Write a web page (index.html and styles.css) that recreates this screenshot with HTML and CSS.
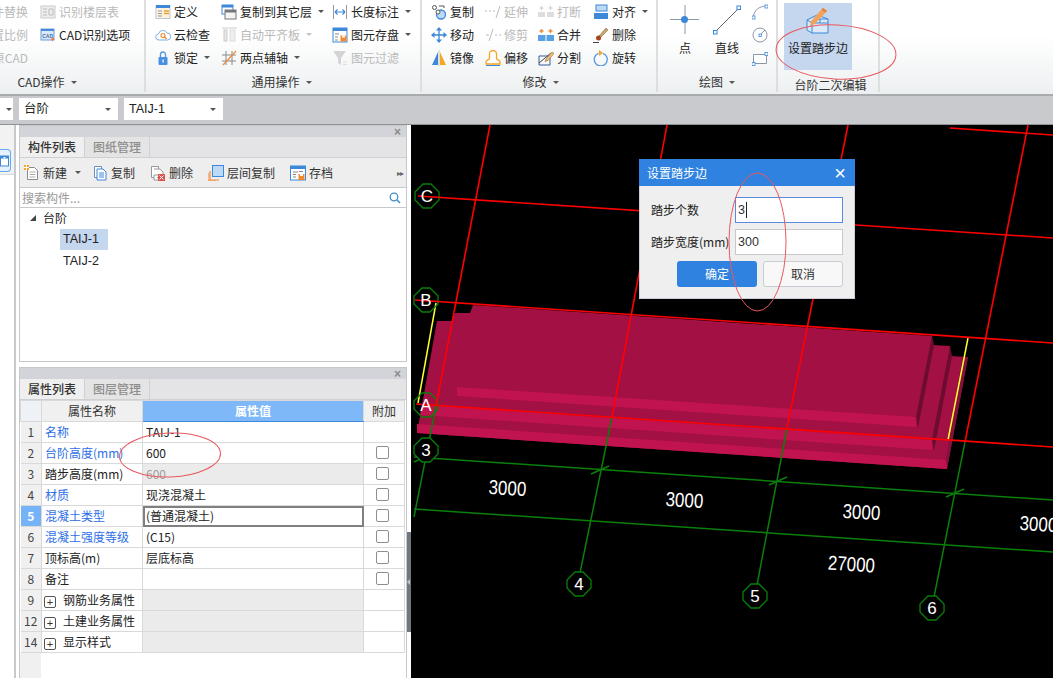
FILE: index.html
```html
<!DOCTYPE html>
<html lang="zh-CN">
<head>
<meta charset="utf-8">
<title>设置踏步边</title>
<link rel="stylesheet" href="styles.css">
</head>
<body>
<div class="app">
  <header class="ribbon">
    <section class="group g1">
      <div class="gbody">
        <div class="col clipcol">
          <div class="cell off"><span class="nowrap">构件替换</span></div>
          <div class="cell off"><span class="nowrap">设置比例</span></div>
          <div class="cell off"><span class="nowrap">还原CAD</span></div>
        </div>
        <div class="col">
          <div class="cell off"><svg class="ic" viewBox="0 0 16 16"><rect x="1" y="2" width="14" height="12" fill="#eee" stroke="#ccc"/><path d="M3 5h4M3 8h4M3 11h4M9 5h4v6H9z" stroke="#bbb" fill="none"/></svg><span>识别楼层表</span></div>
          <div class="cell"><svg class="ic" viewBox="0 0 16 16"><rect x="1" y="2" width="13" height="11" fill="#dce8f8" stroke="#6a9bd8"/><rect x="1" y="2" width="13" height="2" fill="#4a8ad8"/><text x="2.2" y="10.5" class="tiny">CAD</text><path d="M11 10l4 2-2 1-.5 2z" fill="#ef7a3a"/></svg><span>CAD识别选项</span></div>
          <div class="cell"></div>
        </div>
      </div>
      <div class="gtitle">CAD操作<i class="caret"></i></div>
    </section>

    <section class="group g2">
      <div class="gbody">
        <div class="col w66">
          <div class="cell"><svg class="ic" viewBox="0 0 16 16"><rect x="1" y="1.500" width="14" height="13" fill="#fdf3dc" stroke="#b9c7d8"/><rect x="1" y="1" width="14" height="3" fill="#3d88d8"/><path d="M3 7h4M3 9.500h4M3 12h4" stroke="#999"/><path d="M9 7h5M9 9.500h5" stroke="#f0a030" stroke-width="1.500"/></svg><span>定义</span></div>
          <div class="cell"><svg class="ic" viewBox="0 0 16 16"><path d="M4 13a3 3 0 0 1-.5-6 4.500 4.500 0 0 1 8.500-1 3.500 3.500 0 0 1 .5 7z" fill="#fff" stroke="#7fb2e8"/><circle cx="8" cy="8.500" r="2" fill="none" stroke="#f08a30" stroke-width="1.200"/><path d="M9.500 10l2 2" stroke="#f08a30" stroke-width="1.200"/></svg><span>云检查</span></div>
          <div class="cell"><svg class="ic" viewBox="0 0 16 16"><path d="M5.500 7V4.500a2.500 2.500 0 0 1 5 0V7" fill="none" stroke="#5a9ae0" stroke-width="1.400"/><rect x="3.500" y="7" width="9" height="8" rx="1" fill="#4a90e2"/><rect x="7.500" y="9.500" width="1.200" height="3" fill="#fff"/></svg><span>锁定</span><i class="caret"></i></div>
        </div>
        <div class="col w111">
          <div class="cell"><svg class="ic" viewBox="0 0 16 16"><rect x="1" y="1" width="11" height="9" fill="#fff" stroke="#3d88d8"/><rect x="1" y="1" width="11" height="2.500" fill="#3d88d8"/><rect x="4" y="6" width="11" height="9" fill="#f4f4f4" stroke="#777"/><rect x="4" y="6" width="11" height="2.500" fill="#777"/></svg><span>复制到其它层</span><i class="caret"></i></div>
          <div class="cell off"><svg class="ic" viewBox="0 0 16 16"><path d="M1 1h15" stroke="#ccc"/><rect x="3" y="3" width="3" height="11" fill="#e6e6e6" stroke="#ccc"/><rect x="9" y="3" width="5" height="11" fill="#eee" stroke="#ddd"/></svg><span>自动平齐板</span><i class="caret"></i></div>
          <div class="cell"><svg class="ic" viewBox="0 0 16 16"><path d="M5 1v14M11 1v14M1 5h14M1 11h14" stroke="#8a8a8a" fill="none"/><path d="M2 15L15 1" stroke="#ef8a3a" stroke-width="1.200"/></svg><span>两点辅轴</span><i class="caret"></i></div>
        </div>
        <div class="col">
          <div class="cell"><svg class="ic" viewBox="0 0 16 16"><path d="M1.500 1v14M14.500 1v14" stroke="#999"/><path d="M3 8h10M3 8l2.500-2.500M3 8l2.500 2.500M13 8l-2.500-2.500M13 8l-2.500 2.500" stroke="#3d88d8" stroke-width="1.200" fill="none"/></svg><span>长度标注</span><i class="caret"></i></div>
          <div class="cell"><svg class="ic" viewBox="0 0 16 16"><rect x="1" y="1" width="14" height="14" fill="#fff" stroke="#3d88d8"/><rect x="1" y="1" width="14" height="3" fill="#3d88d8"/><path d="M3 7h4M3 10h3M3 13h3" stroke="#888"/><rect x="8.500" y="8.500" width="6" height="6" fill="#f08a30"/><rect x="10" y="8.500" width="3" height="2" fill="#fff"/></svg><span>图元存盘</span><i class="caret"></i></div>
          <div class="cell off"><svg class="ic" viewBox="0 0 16 16"><path d="M1 1h13L9 8v7L6 13V8z" fill="#d4d4d4"/><path d="M11 12h4M11 14.500h4" stroke="#ddd"/></svg><span>图元过滤</span></div>
        </div>
      </div>
      <div class="gtitle">通用操作<i class="caret"></i></div>
    </section>

    <section class="group g3">
      <div class="gbody">
        <div class="col w54">
          <div class="cell"><svg class="ic" viewBox="0 0 16 16"><circle cx="3.500" cy="3.500" r="2" fill="#fff" stroke="#555"/><path d="M8 2h5v2" fill="none" stroke="#555"/><circle cx="10" cy="10.500" r="4.500" fill="#bcd9f5" stroke="#3d88d8" stroke-width="1.300"/><circle cx="7" cy="8" r="2" fill="#fff" stroke="#555"/></svg><span>复制</span></div>
          <div class="cell"><svg class="ic" viewBox="0 0 16 16"><path d="M8 0l3 3.500H5zM8 16l-3-3.500h6zM0 8l3.500-3v6zM16 8l-3.500 3V5z" fill="#3d88d8"/><path d="M8 3v10M3 8h10" stroke="#3d88d8" stroke-width="1.300"/></svg><span>移动</span></div>
          <div class="cell"><svg class="ic" viewBox="0 0 16 16"><path d="M7 2v13H1z" fill="#3d88d8"/><path d="M9 2v13h6z" fill="#f5a623"/><path d="M8 0v16" stroke="#aaa" stroke-width=".6"/></svg><span>镜像</span></div>
        </div>
        <div class="col w53">
          <div class="cell off"><svg class="ic" viewBox="0 0 16 16"><path d="M0 7h2M4 7h2M8 7h2" stroke="#bbb"/><path d="M11 14l4-12" stroke="#bbb"/></svg><span>延伸</span></div>
          <div class="cell off"><svg class="ic" viewBox="0 0 16 16"><path d="M1 8h3M10 8h2M14 8h2" stroke="#bbb"/><path d="M4 14L8 2" stroke="#bbb"/></svg><span>修剪</span></div>
          <div class="cell"><svg class="ic" viewBox="0 0 16 16"><path d="M1 14v-2c0-2 3-2 3.500-3.500V4a3.500 3.500 0 0 1 7 0v4.500C12 10 15 10 15 12v2z" fill="#fff" stroke="#f5a623" stroke-width="1.300"/><path d="M1 15.500h14" stroke="#3d88d8"/></svg><span>偏移</span></div>
        </div>
        <div class="col w55">
          <div class="cell off"><svg class="ic" viewBox="0 0 16 16"><rect x="0" y="8" width="7" height="5" fill="#ddd"/><rect x="9" y="8" width="7" height="5" fill="#ddd"/><path d="M3.500 2v4M1.500 4h4M12.500 2v4M10.500 4h4" stroke="#ccc"/></svg><span>打断</span></div>
          <div class="cell"><svg class="ic" viewBox="0 0 16 16"><rect x="0" y="8" width="16" height="6" fill="#5aa0e6"/><path d="M8 8v6" stroke="#fff"/><path d="M3.500 2v4M1.500 4h4M12.500 2v4M10.500 4h4" stroke="#f08a30" stroke-width="1.300"/></svg><span>合并</span></div>
          <div class="cell"><svg class="ic" viewBox="0 0 16 16"><path d="M1 6h11v9H1z" fill="none" stroke="#335f99"/><path d="M1 13L13 3" stroke="#444"/><path d="M8 9l6-7 2 1.500-6 7-3 1z" fill="#f0c080" stroke="#a06030" stroke-width=".6"/></svg><span>分割</span></div>
        </div>
        <div class="col">
          <div class="cell"><svg class="ic" viewBox="0 0 16 16"><rect x="3" y="1" width="11" height="6" fill="#bcd9f5" stroke="#3d88d8"/><rect x="1" y="9" width="14" height="6" fill="#3d88d8"/></svg><span>对齐</span><i class="caret"></i></div>
          <div class="cell"><svg class="ic" viewBox="0 0 16 16"><path d="M6 9l7-8 2 2-7 7z" fill="#c9a770" stroke="#8a6a40" stroke-width=".6"/><circle cx="5.500" cy="11" r="2.500" fill="#a8441c"/><path d="M0 15.500h6" stroke="#444"/></svg><span>删除</span></div>
          <div class="cell"><svg class="ic" viewBox="0 0 16 16"><path d="M10 3.300a6.500 6.500 0 1 1-4.500 0" fill="none" stroke="#5a9ae0" stroke-width="1.300"/><path d="M6 0v6l4-3z" fill="#f5a623"/></svg><span>旋转</span></div>
        </div>
      </div>
      <div class="gtitle">修改<i class="caret"></i></div>
    </section>

    <section class="group g4">
      <div class="gbody">
        <div class="bigbtn">
          <svg class="bigic" viewBox="0 0 30 30"><path d="M15 0v29M0 14.500h29" stroke="#8a97a5"/><circle cx="14.500" cy="14.500" r="3.500" fill="#3d88d8"/></svg>
          <span>点</span>
        </div>
        <div class="bigbtn">
          <svg class="bigic" viewBox="0 0 30 30"><path d="M3 27L27 3" stroke="#667"/><rect x="25" y="1" width="3.500" height="3.500" fill="#fff" stroke="#3d88d8"/><rect x="1.500" y="25.500" width="3.500" height="3.500" fill="#fff" stroke="#3d88d8"/></svg>
          <span>直线</span>
        </div>
        <div class="col smallcol">
          <div class="cell"><svg class="ic" viewBox="0 0 16 16"><path d="M1.500 13C2 6 7 2.500 14 2" fill="none" stroke="#8a97a5"/><rect x="0" y="12" width="3" height="3" fill="#fff" stroke="#3d88d8" stroke-width=".8"/><rect x="13" y="1" width="3" height="3" fill="#fff" stroke="#3d88d8" stroke-width=".8"/></svg></div>
          <div class="cell"><svg class="ic" viewBox="0 0 16 16"><circle cx="8" cy="8" r="7" fill="#fff" stroke="#8a97a5"/><rect x="7" y="7" width="2.500" height="2.500" fill="#fff" stroke="#3d88d8" stroke-width=".8"/><path d="M9 7l4-4" stroke="#8a97a5"/></svg></div>
          <div class="cell"><svg class="ic" viewBox="0 0 16 16"><path d="M1.500 4.500h13v9h-13z" fill="#fff" stroke="#8a97a5"/><rect x="13" y="2.500" width="3" height="3" fill="#fff" stroke="#3d88d8" stroke-width=".8"/><rect x="0" y="12.500" width="3" height="3" fill="#fff" stroke="#3d88d8" stroke-width=".8"/></svg></div>
        </div>
      </div>
      <div class="gtitle">绘图<i class="caret"></i></div>
    </section>

    <section class="group g5">
      <div class="gbody">
        <div class="hibtn">
          <svg class="hiic" viewBox="0 0 24 30"><path d="M1 14l10-5 11 4v14H6L1 24z" fill="#dbe8f8" stroke="#3d88d8"/><path d="M6 17v10M6 17h16M1 14l5 3M14 17v-4M14 13H8M22 13l-8 0" fill="none" stroke="#3d88d8"/><path d="M5 15L17 2l4 3L9 18l-5 2z" fill="#f0a35a"/><path d="M17 2l4 3-1.500 1.500-4-3z" fill="#e88030"/></svg>
          <span>设置踏步边</span>
        </div>
      </div>
      <div class="gtitle low">台阶二次编辑</div>
    </section>
  </header>

  <div class="selbar">
    <div class="sel sel0"><i class="caret"></i></div>
    <div class="sel"><span>台阶</span><i class="caret"></i></div>
    <div class="sel"><span>TAIJ-1</span><i class="caret"></i></div>
  </div>

  <main class="main">
    <aside class="side">
      <div class="sidetop">
        <div class="sidebtn"><svg viewBox="0 0 10 14" class="sideic"><rect x=".5" y="2" width="8" height="10" fill="#fff" stroke="#3d88d8"/><rect x=".5" y="2" width="8" height="2.500" fill="#3d88d8"/><path d="M3 3h3l-1.500 1.500z" fill="#fff"/></svg></div>
      </div>
    </aside>

    <div class="panels">
      <section class="panel p1">
        <div class="pbar"><span class="close">×</span></div>
        <div class="tabs"><span class="tab on">构件列表</span><span class="tab">图纸管理</span></div>
        <div class="ptools">
          <div class="tool t-new"><svg class="ic" viewBox="0 0 16 16"><path d="M3.500 2.500h7l3 3v9h-10z" fill="#fff" stroke="#8a8a8a"/><path d="M5.500 7h6M5.500 9.500h6M5.500 12h6" stroke="#aaa"/><rect x="0" y="0" width="5" height="5" fill="#f5a623"/><path d="M0 2.500h5M2.500 0v5" stroke="#fff"/></svg><span>新建</span><i class="caret"></i></div>
          <div class="tool"><svg class="ic" viewBox="0 0 16 16"><path d="M2.500 1.500h7v11h-7z" fill="#fff" stroke="#6a8fb8"/><path d="M5 4h6l3 3v8H5z" fill="#fff" stroke="#3d88d8"/><path d="M7 8h5M7 10h5M7 12h5" stroke="#3d88d8"/></svg><span>复制</span></div>
          <div class="tool"><svg class="ic" viewBox="0 0 16 16"><path d="M1.500 1.500h7v11h-7z" fill="#fff" stroke="#999"/><path d="M4 4h6l3 3v3H4v5h4" fill="#fff" stroke="#999"/><rect x="8" y="9" width="7" height="7" fill="#d9534f"/><path d="M9.500 10.500l4 4M13.500 10.500l-4 4" stroke="#fff"/></svg><span>删除</span></div>
          <div class="tool"><svg class="ic" viewBox="0 0 16 16"><path d="M2 6v9h9" fill="none" stroke="#f08a30" stroke-width="1.200"/><path d="M0 8v8h8" fill="none" stroke="#f08a30" stroke-width="1"/><rect x="4.500" y=".5" width="11" height="11" fill="#bcd9f5" stroke="#3d88d8"/></svg><span>层间复制</span></div>
          <div class="tool"><svg class="ic" viewBox="0 0 16 16"><rect x=".5" y="1" width="15" height="14" fill="#fff" stroke="#3d88d8"/><rect x=".5" y="1" width="15" height="3" fill="#3d88d8"/><path d="M3 7h5M3 9.500h3M3 12h3M9 6.500h4" stroke="#888"/><rect x="8.500" y="9" width="6" height="6" fill="#f08a30"/><rect x="10" y="9" width="3" height="2" fill="#fff"/></svg><span>存档</span></div>
          <span class="more">▸▸</span>
        </div>
        <div class="search"><span>搜索构件...</span><svg class="searchic" viewBox="0 0 12 12"><circle cx="5" cy="5" r="3.800" fill="none" stroke="#3d8fc8" stroke-width="1.300"/><path d="M8 8l3 3" stroke="#3d8fc8" stroke-width="1.500"/></svg></div>
        <div class="tree">
          <div class="troot"><i class="tri"></i><span>台阶</span></div>
          <div class="titem"><span class="sel-item">TAIJ-1</span></div>
          <div class="titem"><span class="plain-item">TAIJ-2</span></div>
        </div>
      </section>

      <section class="panel p2">
        <div class="pbar"><span class="close">×</span></div>
        <div class="tabs"><span class="tab on">属性列表</span><span class="tab">图层管理</span></div>
        <div class="tblwrap">
          <table class="props">
            <colgroup><col class="c0"><col class="c1"><col class="c2"><col class="c3"></colgroup>
            <thead><tr><th></th><th>属性名称</th><th class="hval">属性值</th><th>附加</th></tr></thead>
            <tbody>
              <tr><td class="n">1</td><td class="blue">名称</td><td>TAIJ-1</td><td></td></tr>
              <tr><td class="n">2</td><td class="blue">台阶高度(mm)</td><td>600</td><td class="ck"><i class="box"></i></td></tr>
              <tr><td class="n">3</td><td>踏步高度(mm)</td><td class="gray dim">600</td><td class="ck"><i class="box"></i></td></tr>
              <tr><td class="n">4</td><td class="blue">材质</td><td>现浇混凝土</td><td class="ck"><i class="box"></i></td></tr>
              <tr><td class="n cur">5</td><td class="blue">混凝土类型</td><td class="focus">(普通混凝土)</td><td class="ck"><i class="box"></i></td></tr>
              <tr><td class="n">6</td><td class="blue">混凝土强度等级</td><td>(C15)</td><td class="ck"><i class="box"></i></td></tr>
              <tr><td class="n">7</td><td>顶标高(m)</td><td>层底标高</td><td class="ck"><i class="box"></i></td></tr>
              <tr><td class="n">8</td><td>备注</td><td></td><td class="ck"><i class="box"></i></td></tr>
              <tr><td class="n">9</td><td class="grp"><i class="plus">+</i>钢筋业务属性</td><td class="gray"></td><td></td></tr>
              <tr><td class="n">12</td><td class="grp"><i class="plus">+</i>土建业务属性</td><td class="gray"></td><td></td></tr>
              <tr><td class="n">14</td><td class="grp"><i class="plus">+</i>显示样式</td><td class="gray"></td><td></td></tr>
            </tbody>
          </table>
          <div class="tblrest"><div class="restn"></div></div>
        </div>
      </section>
    </div>

    <div class="split"><div class="handle"><i class="harrow"></i></div></div>

    <div class="canvas">
      <svg class="cad" viewBox="411 125 642 553" preserveAspectRatio="none">
        <polygon class="face" points="437,321 452,321 455,313 470,313 473,305 932,336 932,345 950,346 950,356 968,357 947,469 417,433"/>
        <polygon class="bright" points="417,424 947,460 947,469 417,433"/>
        <polygon class="bright" points="422,405 932,440 932,450 420,415"/>
        <polygon class="bright" points="457,387 916,417 916,427 457,396"/>
        <polygon class="side1" points="932,336 934,345 918,428 916,417"/>
        <polygon class="side1" points="950,346 952,356 934,451 932,440"/>
        <polygon class="side2" points="962,357 968,357 947,469 946,460"/>

        <g class="yellow"><line x1="436" y1="303" x2="418" y2="403"/><line x1="968" y1="338" x2="948" y2="440"/></g>

        <g class="green">
          <line x1="436" y1="406" x2="414" y2="517"/>
          <line x1="612" y1="417" x2="580" y2="573"/>
          <line x1="787" y1="428" x2="757" y2="585"/>
          <line x1="965" y1="442" x2="934" y2="597"/>
          <line x1="414" y1="457" x2="1053" y2="500"/>
          <line x1="414" y1="509" x2="1053" y2="552"/>
          <line x1="414" y1="462" x2="432" y2="454"/>
          <line x1="591" y1="474" x2="609" y2="466"/>
          <line x1="769" y1="485" x2="787" y2="477"/>
          <line x1="946" y1="497" x2="964" y2="489"/>
          <polygon class="oct open" points="423,184 431,184 439,192 439,200 431,208 423,208 415,200 415,192"/>
          <polygon class="oct open" points="422,288 430,288 438,296 438,304 430,312 422,312 414,304 414,296"/>
          <polygon class="oct open" points="422,393 430,393 438,401 438,409 430,417 422,417 414,409 414,401"/>
          <polygon class="oct" points="422,438 430,438 438,446 438,454 430,462 422,462 414,454 414,446"/>
          <polygon class="oct" points="575,572 583,572 591,580 591,588 583,596 575,596 567,588 567,580"/>
          <polygon class="oct" points="751,584 759,584 767,592 767,600 759,608 751,608 743,600 743,592"/>
          <polygon class="oct" points="928,596 936,596 944,604 944,612 936,620 928,620 920,612 920,604"/>
        </g>

        <g class="red">
          <line x1="490" y1="125" x2="436" y2="406"/>
          <line x1="667" y1="125" x2="612" y2="417"/>
          <line x1="848" y1="125" x2="787" y2="428"/>
          <line x1="1028" y1="125" x2="965" y2="442"/>
          <line x1="418" y1="196" x2="1053" y2="238"/>
          <line x1="415" y1="300" x2="1053" y2="343"/>
          <line x1="416" y1="404" x2="1053" y2="447"/>
          <line x1="950" y1="128" x2="1053" y2="135"/>
        </g>

        <g class="labels">
          <text x="427" y="202">C</text>
          <text x="426" y="306">B</text>
          <text x="426" y="411">A</text>
          <text x="426" y="456">3</text>
          <text x="579" y="590">4</text>
          <text x="755" y="602">5</text>
          <text x="932" y="614">6</text>
          <text class="dim-t" transform="translate(507,495) rotate(3.8) scale(.94,1.12)">3000</text>
          <text class="dim-t" transform="translate(684,507) rotate(3.8) scale(.94,1.12)">3000</text>
          <text class="dim-t" transform="translate(861,519) rotate(3.8) scale(.94,1.12)">3000</text>
          <text class="dim-t" transform="translate(1038,531) rotate(3.8) scale(.94,1.12)">3000</text>
          <text class="dim-t" transform="translate(851,571) rotate(3.8) scale(.94,1.12)">27000</text>
        </g>
      </svg>

      <div class="dialog">
        <div class="dhead"><span>设置踏步边</span><span class="dx">×</span></div>
        <div class="dbody">
          <div class="drow"><label>踏步个数</label><div class="dinput active">3<i class="cursor"></i></div></div>
          <div class="drow"><label>踏步宽度(mm)</label><div class="dinput">300</div></div>
          <div class="dbtns"><span class="btn ok">确定</span><span class="btn cancel">取消</span></div>
        </div>
      </div>
    </div>
  </main>

  <svg class="marks" viewBox="0 0 1053 678">
    <ellipse cx="836" cy="52" rx="60" ry="27" transform="rotate(3 836 52)"/>
    <ellipse cx="170" cy="455" rx="50.500" ry="22" transform="rotate(-2 170 455)"/>
    <ellipse cx="757.500" cy="242" rx="28.500" ry="69"/>
  </svg>
</div>
</body>
</html>
```

FILE: styles.css
```css
* { box-sizing: border-box; }
html, body { margin: 0; padding: 0; }
body {
  width: 1053px;
  height: 678px;
  overflow: hidden;
  font-family: "Noto Sans CJK SC", "Liberation Sans", sans-serif;
  font-size: 12px;
  line-height: 16px;
  color: #222;
  background: #fff;
}
i { font-style: normal; }
svg { display: block; flex: none; }

.app { position: relative; width: 1053px; height: 678px; display: flex; flex-direction: column; }

/* Ribbon */
.ribbon {
  height: 96px;
  flex: none;
  display: flex;
  background: linear-gradient(#ffffff 0, #ffffff 35px, #edf0f1 93px);
  border-bottom: 2px solid #a9abae;
}
.group { display: flex; flex-direction: column; height: 92px; border-right: 2px solid #dcdedf; }
.g1 { width: 146px; }
.g2 { width: 276px; padding-left: 9px; }
.g3 { width: 236px; padding-left: 9px; }
.g4 { width: 120px; padding-left: 6px; }
.g5 { width: 102px; padding-left: 6px; }
.gbody { display: flex; height: 70px; flex: none; }
.col { display: flex; flex-direction: column; }
.clipcol { width: 28px; margin-right: 12px; overflow: hidden; }
.clipcol .cell { justify-content: flex-end; }
.nowrap { white-space: nowrap; flex: none; }
.w66 { width: 66px; }
.w111 { width: 111px; }
.w54 { width: 54px; }
.w53 { width: 53px; }
.w55 { width: 55px; }
.cell { height: 23px; display: flex; align-items: center; gap: 3px; white-space: nowrap; }
.off { color: #b9b9b9; }
.ic { width: 16px; height: 16px; }
.tiny { font-size: 5px; font-family: "Liberation Sans", sans-serif; fill: #3d6fb0; font-weight: 700; }
.caret {
  display: inline-block;
  width: 0; height: 0;
  border-left: 3px solid transparent;
  border-right: 3px solid transparent;
  border-top: 3px solid #555;
  margin-left: 3px;
  flex: none;
}
.off .caret { border-top-color: #c4c4c4; }
.gtitle {
  height: 22px;
  display: flex;
  align-items: center;
  justify-content: center;
  color: #333;
  padding-top: 2px;
  padding-right: 6px;
}
.gtitle .caret { margin-left: 6px; }
.g1 .gtitle { padding-right: 50px; }
.g2 .gtitle { padding-right: 12px; }
.g5 .gtitle { padding-right: 1px; }
.gtitle.low { padding-top: 8px; }

.bigbtn { width: 42px; display: flex; flex-direction: column; align-items: center; padding-top: 5px; gap: 5px; }
.bigic { width: 30px; height: 30px; }
.smallcol { margin-left: 4px; }

.hibtn {
  width: 68px; height: 67px; margin-top: 3px;
  background: #c5d6ef;
  display: flex; flex-direction: column; align-items: center;
  padding-top: 3px; gap: 4px;
}
.hiic { width: 24px; height: 30px; }
.hibtn span { white-space: nowrap; }

/* Select bar */
.selbar {
  height: 29px; flex: none;
  background: #c8cacd;
  border-bottom: 1px solid #8f9194;
  display: flex; gap: 6px; align-items: flex-start;
  padding-top: 2px;
}
.sel {
  width: 99px; height: 22px;
  background: #fff;
  display: flex; align-items: center; justify-content: space-between;
  padding: 0 7px 0 5px;
  font-family: "Liberation Sans", "Noto Sans CJK SC", sans-serif;
  font-size: 12.500px;
}
.sel0 { width: 13px; padding: 0 1px 0 0; justify-content: flex-end; }
.sel0 .caret, .sel .caret { margin: 0; }

/* Main */
.main { flex: 1; min-height: 0; display: flex; }
.side { width: 16px; flex: none; border-right: 2px solid #c8c9cd; }
.sidetop { height: 50px; background: #f2f2f2; border-bottom: 1px solid #d8d8d8; padding-top: 24px; }
.sidebtn { width: 11px; height: 23px; border: 1px solid #62aaf6; border-left: 0; border-radius: 0 4px 4px 0; background: #e6f1fc; padding-top: 4px; }
.sideic { width: 10px; height: 14px; }

.panels { margin-left: 3px; width: 388px; flex: none; display: flex; flex-direction: column; gap: 5px; }
.panel { border: 1px solid #c7c8cc; border-top: 0; display: flex; flex-direction: column; background: #fff; min-height: 0; }
.p1 { height: 237px; }
.p2 { flex: 1; border-bottom: 0; }
.pbar { height: 12px; flex: none; background: #d3d4d9; border-top: 1px solid #c7c8cc; display: flex; justify-content: flex-end; align-items: center; padding-right: 5px; }
.close { color: #8a8a8a; font-size: 12px; font-weight: 700; line-height: 10px; font-family: "Liberation Sans", sans-serif; }
.tabs { height: 21px; flex: none; display: flex; background: #e4e4e6; border-bottom: 1px solid #cfd0d3; }
.tab { width: 65px; display: flex; align-items: center; justify-content: center; color: #8e8e8e; background: #e4e4e4; border-right: 1px solid #cfd0d3; font-weight: 500; }
.tab.on { color: #333; background: #efefef; }

.ptools { height: 30px; flex: none; display: flex; align-items: center; background: #eeeeee; border-bottom: 1px solid #c7c8cc; padding-left: 4px; gap: 15px; }
.tool { display: flex; align-items: center; gap: 3px; white-space: nowrap; color: #333; }
.tool .caret { margin-left: 5px; }
.t-new { margin-right: -4px; }
.more { margin-left: auto; margin-right: 3px; color: #666; font-size: 8px; letter-spacing: -1px; }
.search { height: 20px; flex: none; display: flex; align-items: center; justify-content: space-between; padding: 1px 5px 0 2px; border-bottom: 1px solid #c7c8cc; color: #999; }
.searchic { width: 12px; height: 12px; }
.tree { flex: 1; color: #222; }
.troot { height: 21px; display: flex; align-items: center; padding: 0 0 2px 10px; }
.tri { width: 0; height: 0; border-right: 6px solid #444; border-top: 6px solid transparent; margin-right: 7px; }
.titem { height: 21px; padding-left: 40px; display: flex; align-items: center; font-family: "Liberation Sans", sans-serif; font-size: 12.500px; }
.sel-item { width: 48px; height: 21px; line-height: 21px; background: #c5d6ef; padding-left: 3px; }
.plain-item { padding-left: 3px; }

/* Table */
.tblwrap { flex: 1; display: flex; flex-direction: column; min-height: 0; }
.props { width: 384px; table-layout: fixed; border-collapse: collapse; flex: none; }
.c0 { width: 21px; }
.c1 { width: 101px; }
.c2 { width: 221px; }
.c3 { width: 41px; }
.props th, .props td { height: 21px; padding: 0 3px 2px; border: 1px solid #d9d9d9; font-weight: 400; white-space: nowrap; overflow: hidden; line-height: 17px; }
.props thead th { background: #f0f0f0; color: #333; text-align: center; }
.props thead th:first-child { background: #eef1f5; }
.props .hval { background: #7eb8f8; color: #fff; font-weight: 700; border-bottom: 1px solid #3d88d8; }
.props td:first-child { border-left: 0; }
.props .n { background: #f0f0f0; text-align: center; color: #444; padding: 0 0 2px; }
.props .cur { background: #74b3f7; color: #fff; font-weight: 700; }
.props .blue { color: #2e6fe6; }
.props .gray { background: #ebebeb; }
.props .dim { color: #a0a0a0; }
.props .focus { outline: 2px solid #808080; outline-offset: -2px; }
.props .ck { padding: 0 0 2px; }
.box { display: block; width: 13px; height: 13px; margin: 0 0 0 12px; border: 1px solid #8e8e8e; border-radius: 2px; background: #fff; }
.props .grp { padding-left: 2px; }
.plus { display: inline-block; width: 12px; height: 12px; line-height: 10px; text-align: center; border: 1px solid #555; border-radius: 2px; margin-right: 7px; font-size: 11px; color: #333; vertical-align: -1px; font-family: "Liberation Sans", sans-serif; }
.tblrest { flex: 1; }
.restn { width: 21px; height: 100%; background: #f0f0f0; }

/* Splitter */
.split { width: 4px; flex: none; padding-top: 407px; }
.handle { width: 4px; height: 100px; background: #6f7780; display: flex; align-items: center; }
.harrow { width: 0; height: 0; border-right: 3px solid #c0c4c8; border-top: 3px solid transparent; border-bottom: 3px solid transparent; }

/* Canvas */
.canvas { position: relative; flex: 1; background: #000; overflow: hidden; }
.cad { width: 642px; height: 553px; }
.face { fill: #a31044; }
.bright { fill: #c0134f; }
.side1 { fill: #6d0b30; }
.side2 { fill: #85103c; }
.yellow line { stroke: #ffff33; stroke-width: 1.500; }
.green line { stroke: #0a7f0a; stroke-width: 1.500; }
.oct { fill: #000; stroke: #0a7f0a; stroke-width: 1.300; }
.oct.open { fill: none; }
.red line { stroke: #ff0000; stroke-width: 1.600; }
.labels text { fill: #fff; font-family: "Liberation Sans", sans-serif; font-size: 17px; text-anchor: middle; }
.labels .dim-t { font-size: 18px; }

/* Dialog */
.dialog { position: absolute; left: 228px; top: 34px; width: 216px; height: 140px; background: #efefef; border: 1px solid #c9cfdd; border-top: 0; }
.dhead { height: 27px; margin: 0 -1px; background: #2f82e0; color: #fff; display: flex; align-items: center; justify-content: space-between; padding: 0 9px 0 8px; }
.dx { font-size: 20px; font-family: "Liberation Sans", sans-serif; line-height: 16px; }
.dbody { padding: 11px 11px 0 11px; display: flex; flex-direction: column; gap: 6px; }
.drow { display: flex; align-items: center; justify-content: space-between; height: 26px; color: #222; }
.drow label { white-space: nowrap; }
.dinput { width: 108px; height: 26px; background: #fff; border: 1px solid #c8c8c8; padding-left: 2px; line-height: 24px; font-size: 12.500px; display: flex; align-items: center; font-family: "Liberation Sans", sans-serif; color: #333; }
.dinput.active { border-color: #5a8ade; }
.cursor { display: block; width: 1px; height: 16px; background: #222; margin-left: 1px; }
.dbtns { display: flex; justify-content: flex-end; gap: 6px; }
.btn { width: 80px; height: 26px; border-radius: 3px; display: flex; align-items: center; justify-content: center; }
.ok { background: #2f82e0; color: #fff; }
.cancel { background: #f8f8f8; border: 1px solid #c8ccd4; color: #333; }

/* Annotation layer */
.marks { position: absolute; left: 0; top: 0; width: 1053px; height: 678px; pointer-events: none; }
.marks ellipse { fill: none; stroke: #e8585c; stroke-width: 1; }
```
